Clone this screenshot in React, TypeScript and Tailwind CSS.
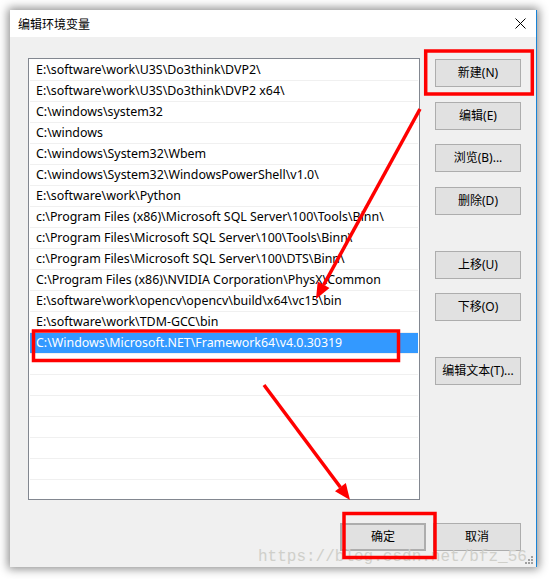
import React from "react";

const paths = [
  "E:\\software\\work\\U3S\\Do3think\\DVP2\\",
  "E:\\software\\work\\U3S\\Do3think\\DVP2 x64\\",
  "C:\\windows\\system32",
  "C:\\windows",
  "C:\\windows\\System32\\Wbem",
  "C:\\windows\\System32\\WindowsPowerShell\\v1.0\\",
  "E:\\software\\work\\Python",
  "c:\\Program Files (x86)\\Microsoft SQL Server\\100\\Tools\\Binn\\",
  "c:\\Program Files\\Microsoft SQL Server\\100\\Tools\\Binn\\",
  "c:\\Program Files\\Microsoft SQL Server\\100\\DTS\\Binn\\",
  "C:\\Program Files (x86)\\NVIDIA Corporation\\PhysX\\Common",
  "E:\\software\\work\\opencv\\opencv\\build\\x64\\vc15\\bin",
  "E:\\software\\work\\TDM-GCC\\bin",
  "C:\\Windows\\Microsoft.NET\\Framework64\\v4.0.30319",
];

const selected = 13;

function Btn({ label, className = "" }: { label: string; className?: string }) {
  return (
    <div
      className={`h-[28px] flex items-center justify-center bg-[#e1e1e1] border border-[#adadad] text-[12px] text-black ${className}`}
    >
      {label}
    </div>
  );
}

export default function App() {
  // 21 rows fill the list, only the first 14 hold a path
  const rows = Array.from({ length: 21 }, (_, i) => paths[i] ?? "");

  return (
    <div className="relative w-[549px] h-[579px] bg-white pt-[10px] pl-[10px] font-['Noto_Sans','Noto_Sans_CJK_SC',sans-serif]">
      <div className="relative w-[527px] h-[557px] bg-[#f0f0f0] border-r border-[#1883d7] shadow-[0_0_9px_2px_rgba(0,0,0,0.45)] flex flex-col overflow-hidden">
        {/* title bar */}
        <div className="h-[27px] bg-white flex items-center justify-between pl-[8px] pr-[10px]">
          <span className="text-[12px] text-black font-['Noto_Sans_CJK_SC',sans-serif]">编辑环境变量</span>
          <svg width="11" height="11" viewBox="0 0 11 11">
            <path d="M0.5 0.5 L10.5 10.5 M10.5 0.5 L0.5 10.5" stroke="#000" strokeWidth="1" />
          </svg>
        </div>

        <div className="flex pl-[18px] pt-[21px]">
          {/* list */}
          <div className="w-[392px] h-[442px] border border-[#828790] bg-white p-[1px] overflow-hidden">
            {rows.map((p, i) => (
              <div
                key={i}
                className={`h-[21px] flex items-center pl-[6px] border-b border-[#f0f0f0] text-[12.4px] whitespace-nowrap ${
                  i === selected ? "bg-[#3399ff] text-white" : "text-black"
                }`}
              >
                {p}
              </div>
            ))}
          </div>

          {/* side buttons */}
          <div className="ml-[15px] pt-[1px] flex flex-col w-[86px]">
            <Btn label="新建(N)" />
            <Btn label="编辑(E)" className="mt-[15px]" />
            <Btn label="浏览(B)..." className="mt-[14px]" />
            <Btn label="删除(D)" className="mt-[15px]" />
            <Btn label="上移(U)" className="mt-[36px]" />
            <Btn label="下移(O)" className="mt-[14px]" />
            <Btn label="编辑文本(T)..." className="mt-[36px]" />
          </div>
        </div>

        <div className="flex justify-end gap-[7px] pr-[15px] mt-[23px]">
          <Btn label="确定" className="w-[86px] border-2 border-[#0078d7]" />
          <Btn label="取消" className="w-[88px]" />
        </div>

        {/* watermark */}
        <span className="absolute left-[248px] top-[539px] text-[16px] leading-[16px] text-[#cfcfca] font-['Liberation_Mono',monospace] whitespace-nowrap">
          https://blog.csdn.net/bfz_56
        </span>
        <svg className="absolute right-[3px] bottom-[3px]" width="8" height="8" viewBox="0 0 8 8">
          <rect x="6" y="0" width="2" height="2" fill="#a0a0a0" />
          <rect x="3" y="3" width="2" height="2" fill="#a0a0a0" />
          <rect x="6" y="3" width="2" height="2" fill="#a0a0a0" />
          <rect x="0" y="6" width="2" height="2" fill="#a0a0a0" />
          <rect x="3" y="6" width="2" height="2" fill="#a0a0a0" />
          <rect x="6" y="6" width="2" height="2" fill="#a0a0a0" />
        </svg>
      </div>

      {/* red annotations drawn over the dialog */}
      <svg className="absolute left-0 top-0 pointer-events-none" width="549" height="579" viewBox="0 0 549 579">
        <g fill="none" stroke="#ff0000" strokeWidth="3.5">
          <rect x="425.7" y="51" width="106.6" height="43" />
          <rect x="33.5" y="331" width="365" height="29.5" />
          <rect x="344" y="513.5" width="91" height="44" />
          <line x1="420" y1="109" x2="323.6" y2="285" />
          <line x1="264" y1="385" x2="340.4" y2="487.2" />
        </g>
        <g fill="#ff0000">
          <polygon points="316,299 329.5,288 317.7,281.6" />
          <polygon points="350,500 345.8,483 335,491.3" />
        </g>
      </svg>
    </div>
  );
}
